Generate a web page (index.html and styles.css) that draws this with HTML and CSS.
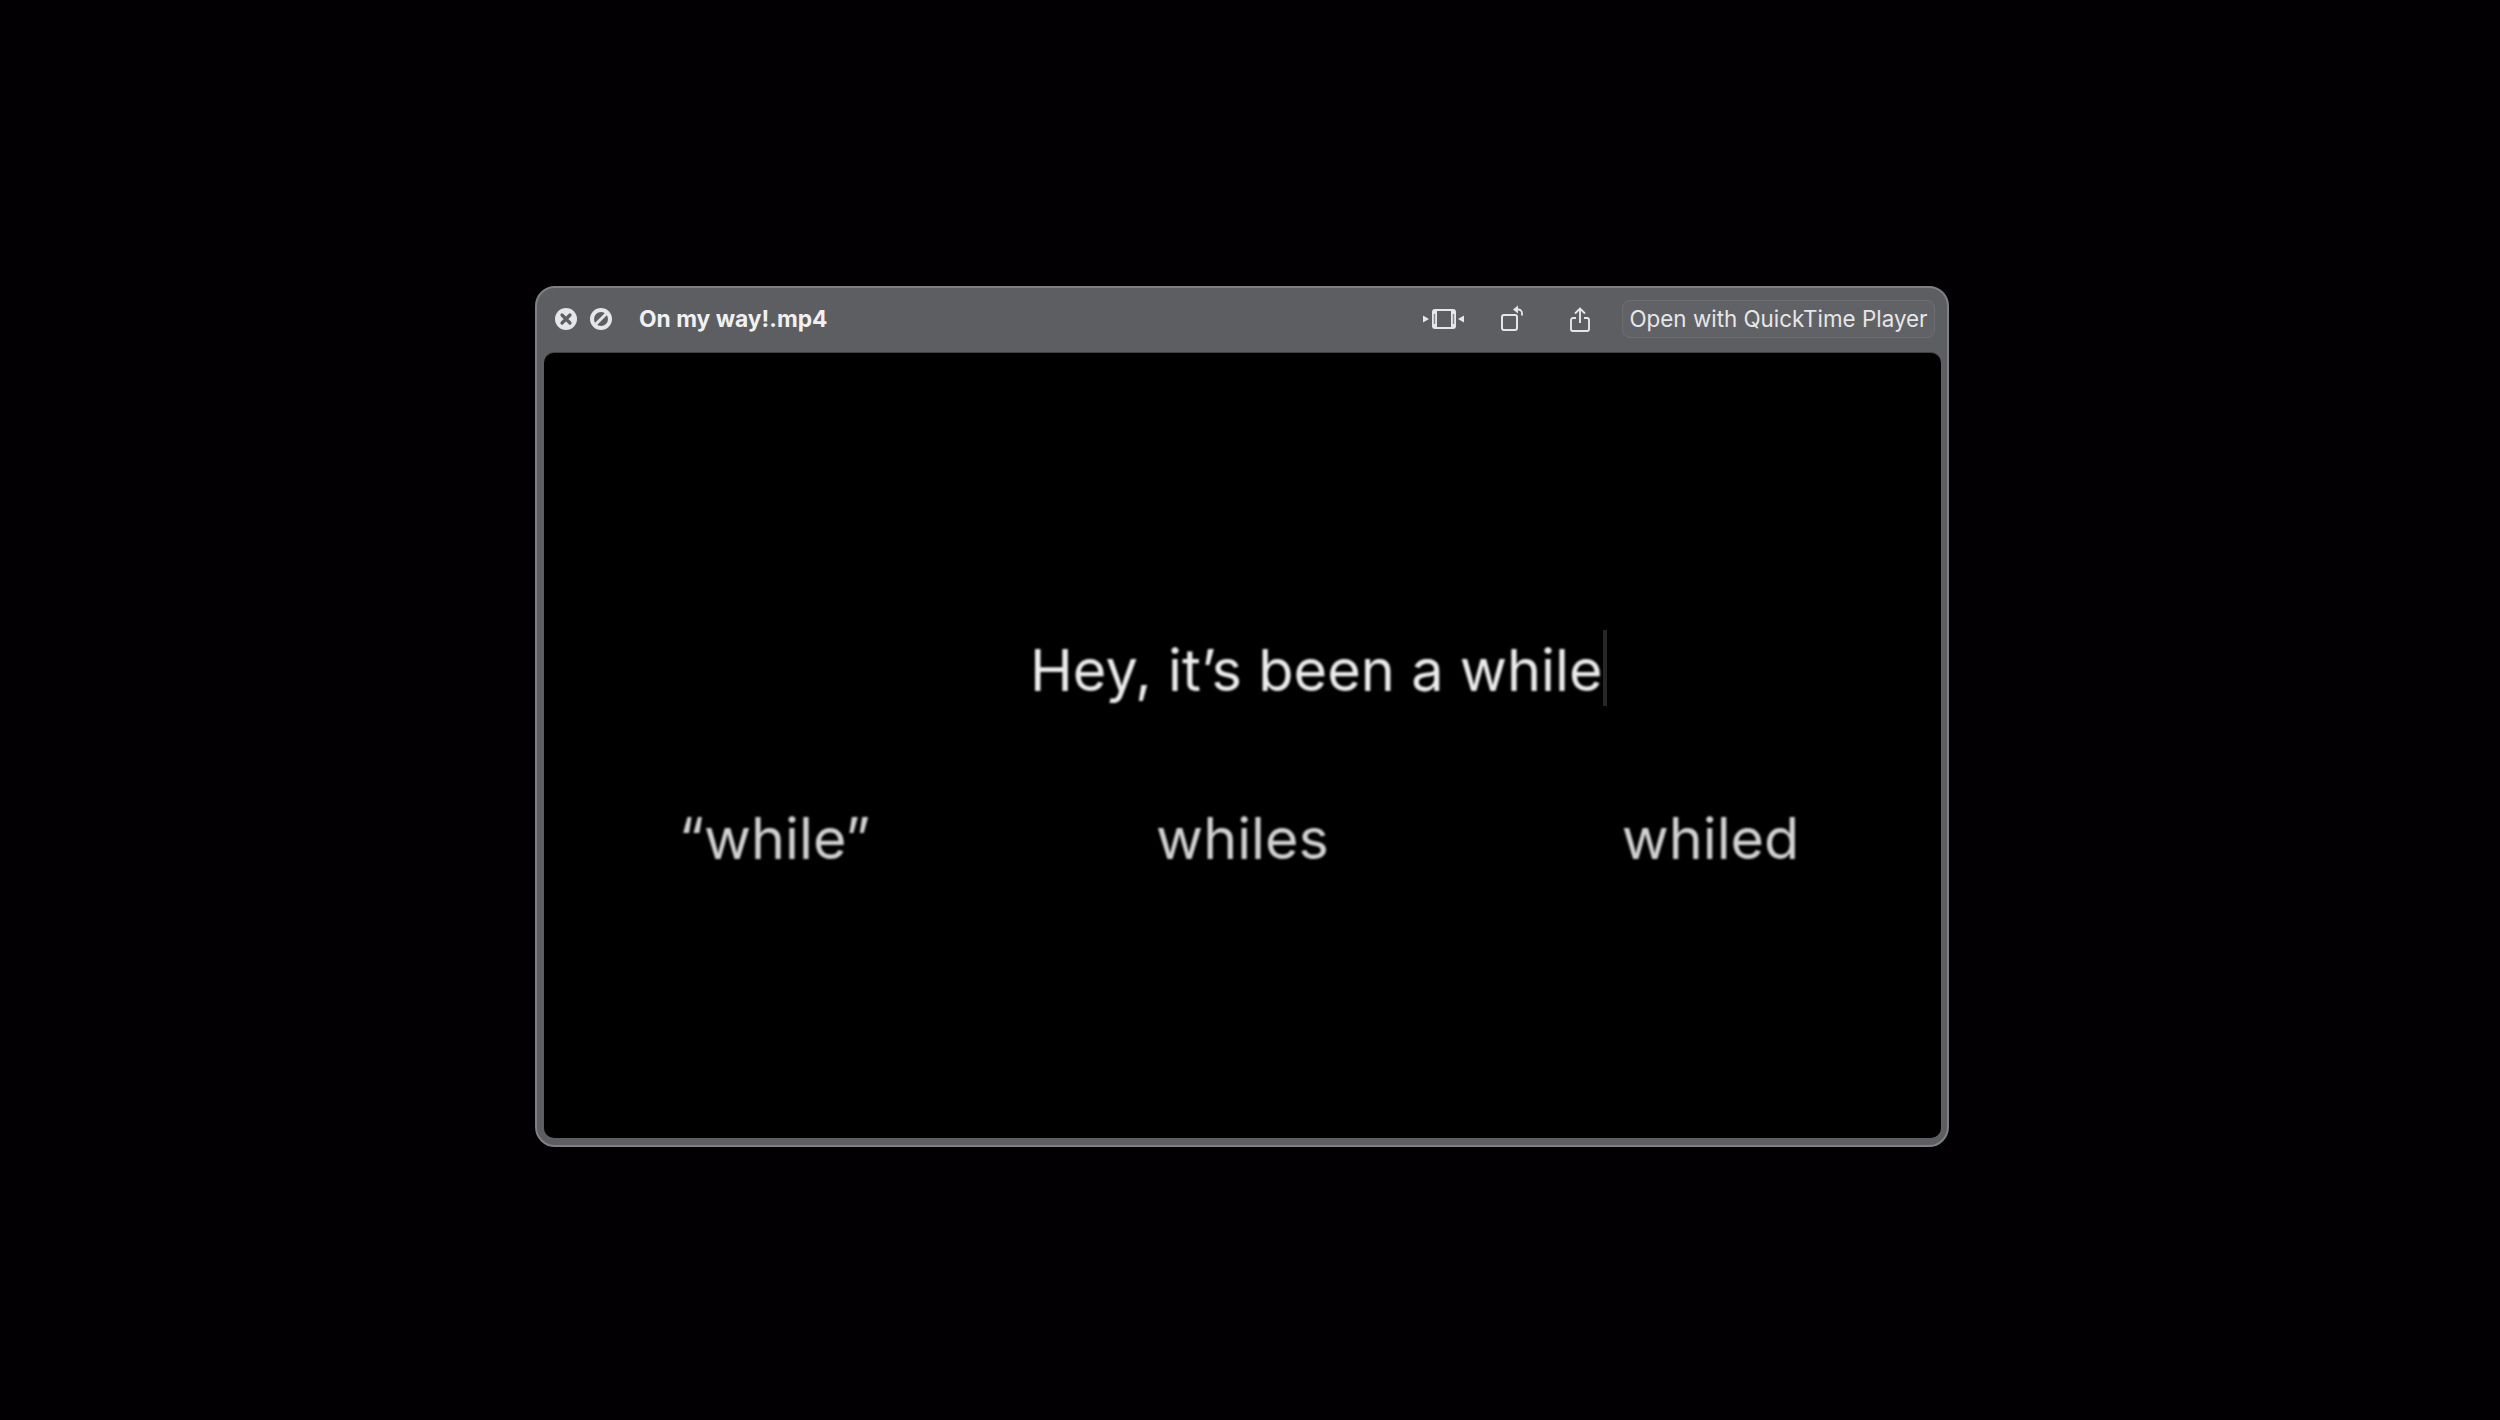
FILE: index.html
```html
<!DOCTYPE html>
<html lang="en">
<head>
    <meta charset="UTF-8">
    <title>On my way!.mp4</title>
    <link rel="stylesheet" href="styles.css">
</head>
<body>
    <div class="preview-window">
        <!-- Title bar -->
        <div class="title-bar">
            <div class="window-buttons">
                <svg class="circle-btn" viewBox="0 0 22 22">
                    <circle cx="11" cy="11" r="11" fill="#e6e6e8"/>
                    <path d="M7 7l8 8M15 7l-8 8" stroke="#5d5e61" stroke-width="3.2" stroke-linecap="round"/>
                </svg>
                <svg class="circle-btn" viewBox="0 0 22 22">
                    <circle cx="11" cy="11" r="11" fill="#e6e6e8"/>
                    <circle cx="11" cy="11" r="7" fill="#5d5e61"/>
                    <path d="M5.500 16.500l11-11" stroke="#e6e6e8" stroke-width="3"/>
                </svg>
            </div>
            <span class="file-name">On my way!.mp4</span>
            <div class="tools">
                <svg class="tool-fit" viewBox="0 0 41 20">
                    <path d="M0 6.500l6 3.500-6 3.500zM41 6.500l-6 3.500 6 3.500z" fill="#e6e6e8"/>
                    <rect x="9" y="0" width="24" height="20" rx="3" fill="#e6e6e8"/>
                    <rect x="14" y="2" width="14" height="16" fill="#5d5e61"/>
                    <path d="M11.500 5v10M30.500 5v10" stroke="#85868a" stroke-width="1.400"/>
                </svg>
                <svg class="tool-rotate" viewBox="0 0 23 26">
                    <rect x="2" y="10" width="15" height="15" rx="2" fill="none" stroke="#e6e6e8" stroke-width="2"/>
                    <path d="M17 4.500h1.500a3.500 3.500 0 0 1 3.500 3.500v2.500" fill="none" stroke="#e6e6e8" stroke-width="1.800"/>
                    <path d="M18 0.500v8l-5-4z" fill="#e6e6e8"/>
                </svg>
                <svg class="tool-share" viewBox="0 0 20 25">
                    <path d="M6 11H3a2 2 0 0 0-2 2v9a2 2 0 0 0 2 2h14a2 2 0 0 0 2-2v-9a2 2 0 0 0-2-2h-3" fill="none" stroke="#e6e6e8" stroke-width="1.900"/>
                    <path d="M10 16V1.500M5 6.500l5-5 5 5" fill="none" stroke="#e6e6e8" stroke-width="1.900"/>
                </svg>
                <button class="open-btn">Open with QuickTime Player</button>
            </div>
        </div>
        <!-- Video -->
        <div class="video">
            <div class="typed-line">
                <span class="typed-text">Hey, it’s been a while</span>
                <span class="caret"></span>
            </div>
            <div class="suggestions">
                <span>“while”</span>
                <span>whiles</span>
                <span>whiled</span>
            </div>
        </div>
    </div>
</body>
</html>
```

FILE: styles.css
```css
/* General Styles */
html, body {
    height: 100%;
}

body {
    margin: 0;
    background: #030003;
    padding: 286px 0 0 535px;
    box-sizing: border-box;
    font-family: Inter, "Liberation Sans", sans-serif;
    color: #e6e6e8;
}

.preview-window {
    width: 1414px;
    height: 861px;
    box-sizing: border-box;
    display: flex;
    flex-direction: column;
    background: #5d5e61;
    border: 2px solid #7f8083;
    border-radius: 20px;
    padding: 0 6px 7px 7px;
}

/* Title bar */
.title-bar {
    height: 62px;
    margin-bottom: 3px;
    flex-shrink: 0;
    display: flex;
    align-items: center;
}

.window-buttons {
    display: flex;
    gap: 13px;
    padding-left: 11px;
}

.circle-btn {
    width: 22px;
    height: 22px;
    display: block;
}

.file-name {
    margin-left: 27px;
    margin-bottom: 2px;
    font-size: 22.8px;
    font-weight: 700;
    color: #f0f0f2;
}

.tools {
    margin-left: auto;
    margin-right: 6px;
    display: flex;
    align-items: center;
}

.tools svg {
    display: block;
}

.tool-fit {
    width: 41px;
    height: 20px;
}

.tool-rotate {
    width: 23px;
    height: 26px;
    margin-left: 36px;
    margin-bottom: 3px;
}

.tool-share {
    width: 20px;
    height: 25px;
    margin-left: 47px;
}

.open-btn {
    width: 313px;
    height: 38px;
    margin-left: 32px;
    padding: 0 0 2px;
    box-sizing: border-box;
    background: #616265;
    border: 1px solid #6e6f72;
    border-radius: 8px;
    font-family: inherit;
    font-size: 22.4px;
    white-space: nowrap;
    color: #e6e6e8;
}

/* Video */
.video {
    flex: 1;
    background: #000;
    border-radius: 10px;
    box-shadow: 0 -1px 0 #3f4042;
}

.typed-line {
    display: flex;
    align-items: center;
    height: 76px;
    margin-top: 277px;
    padding-left: 486px;
}

.typed-text {
    padding-top: 4px;
    font-size: 57.7px;
    color: #ececec;
    filter: blur(0.8px);
}

.caret {
    width: 4px;
    height: 76px;
    background: #262626;
}

.suggestions {
    display: grid;
    grid-template-columns: repeat(3, 468px);
    justify-content: center;
    margin-top: 97px;
    text-align: center;
    font-size: 57.5px;
    color: #d2d2d2;
}

.suggestions span {
    filter: blur(0.8px);
}
```
